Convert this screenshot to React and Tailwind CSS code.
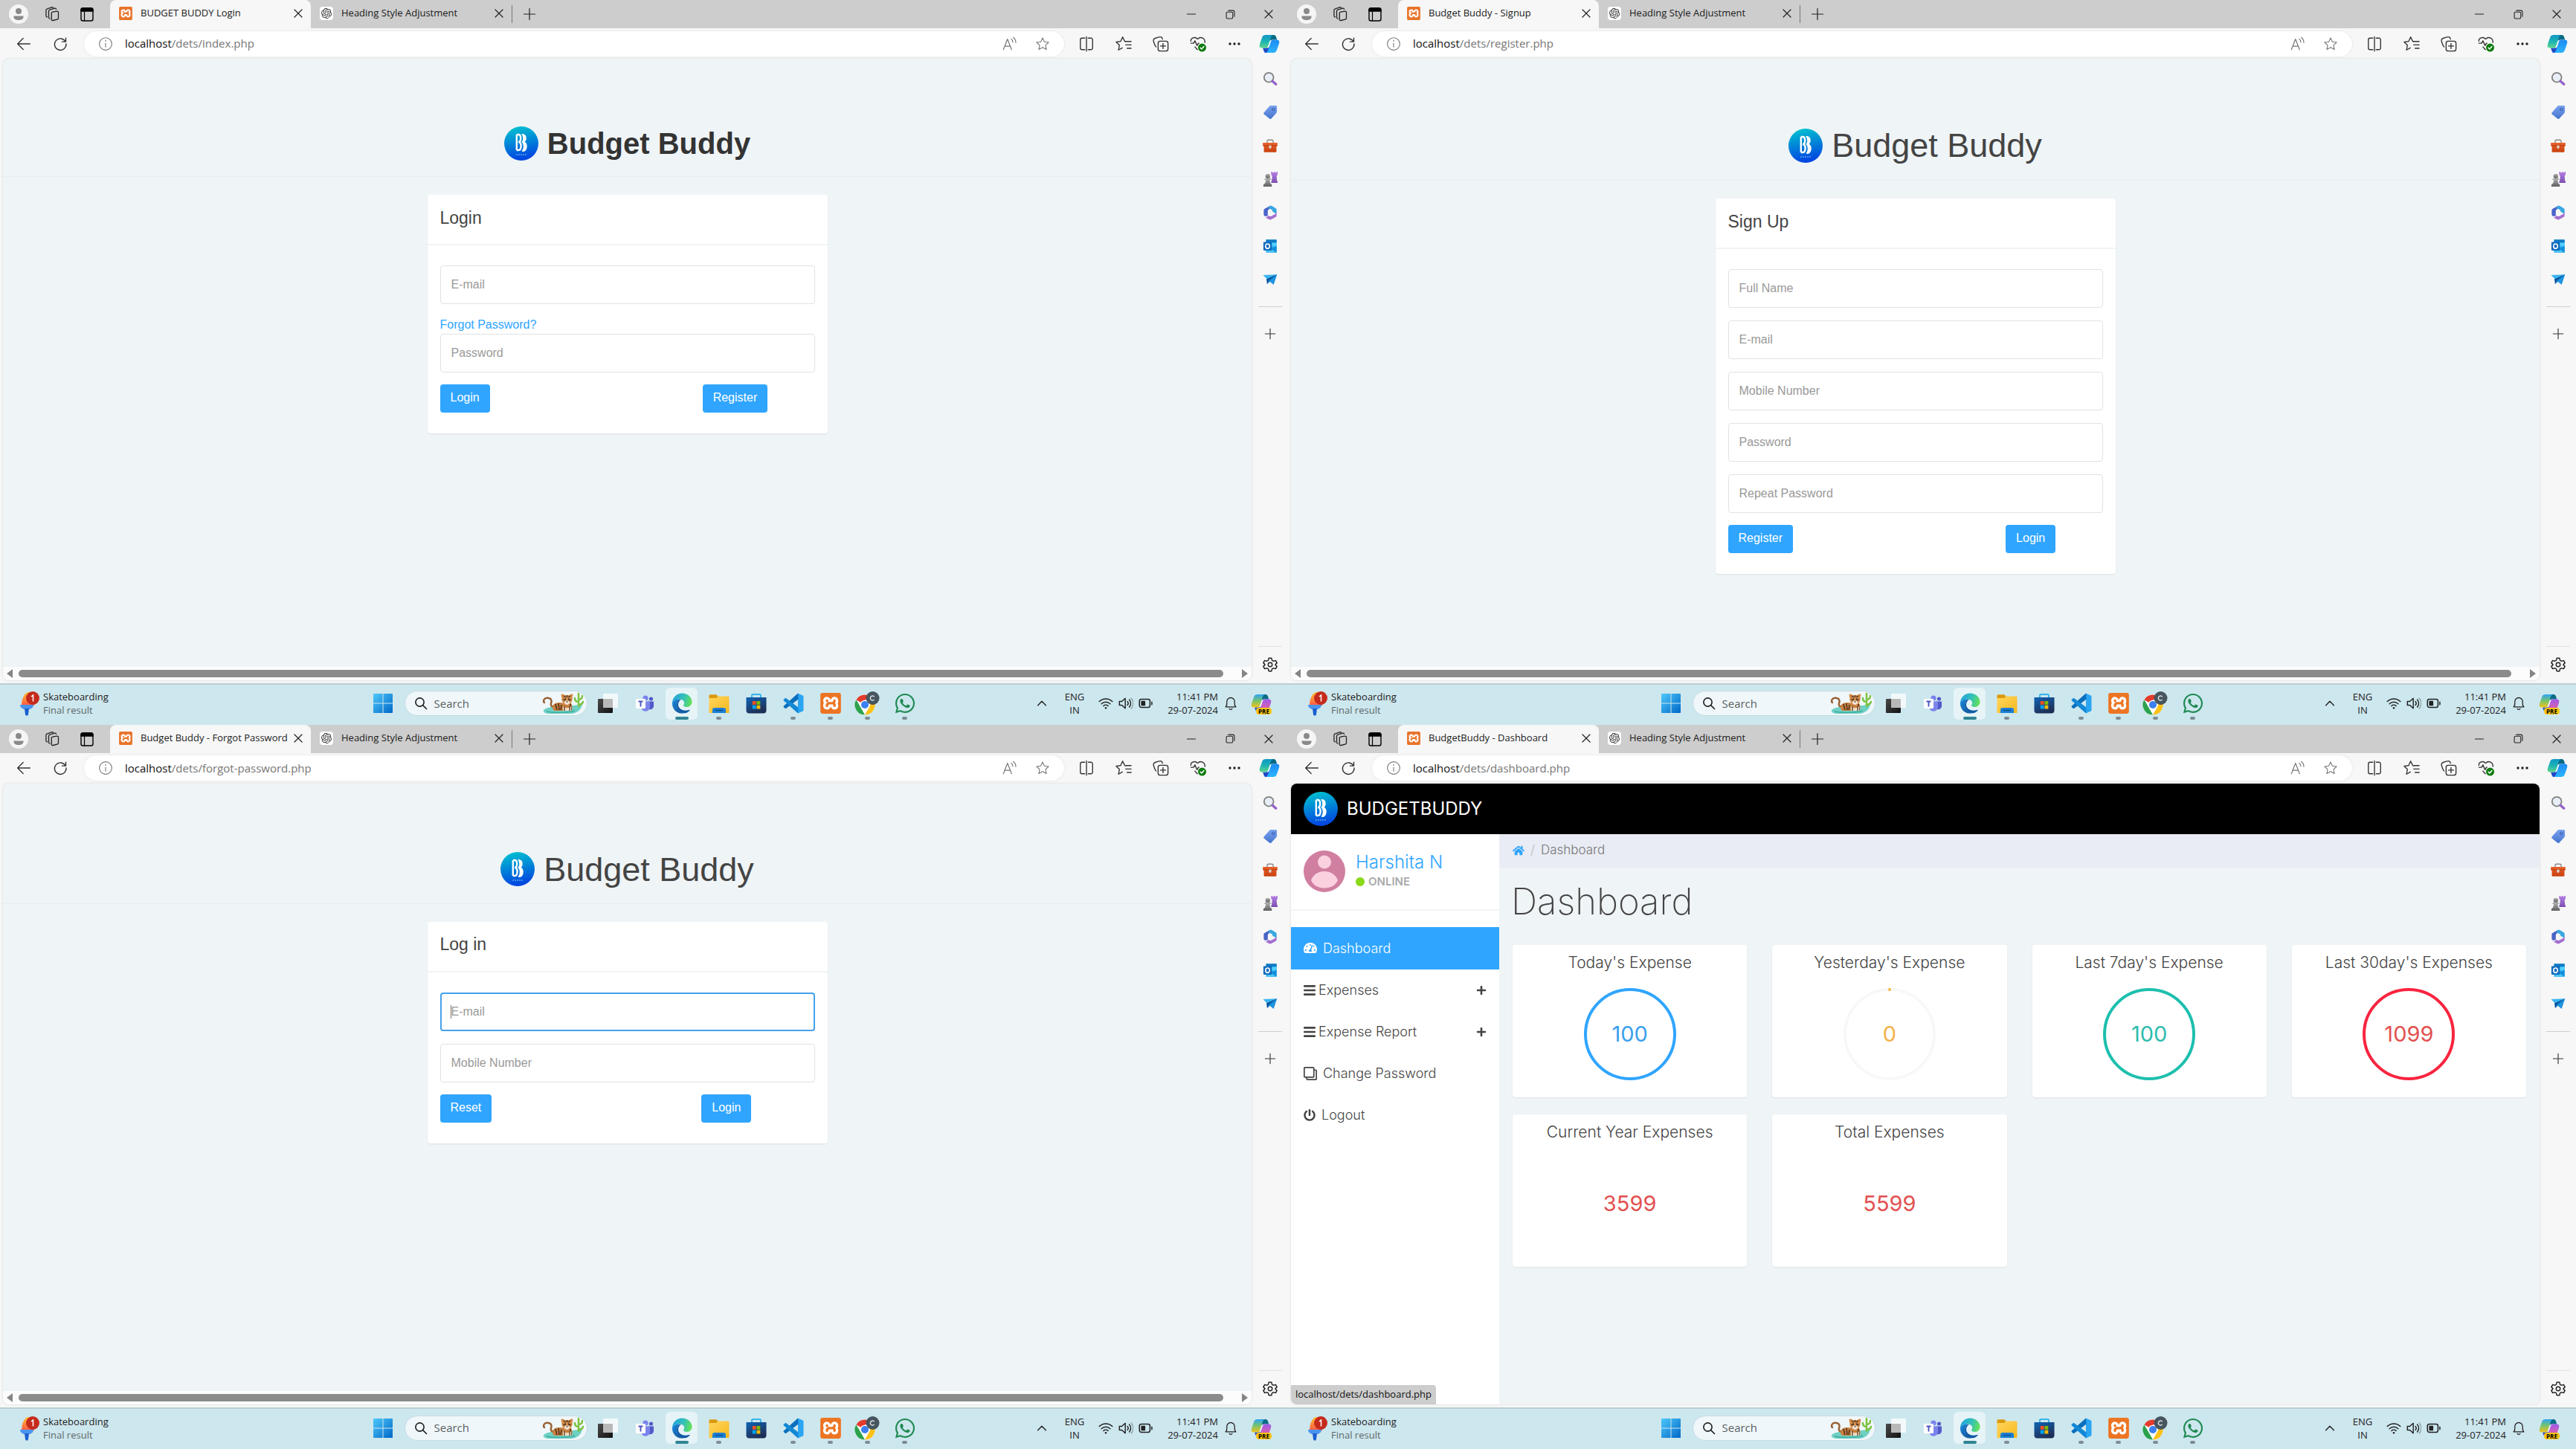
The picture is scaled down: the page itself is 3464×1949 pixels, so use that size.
import React from "react";
import { FaHome, FaBars, FaPlus, FaRegClone, FaPowerOff, FaTachometerAlt, FaWhatsapp } from "react-icons/fa";
import { SiXampp, SiOpenai } from "react-icons/si";

/* ---------- shared gradients ---------- */

function Gradients() {
  return (
    <svg className="absolute h-0 w-0" aria-hidden="true">
      <defs>
        <linearGradient id="gLogo" x1="0" y1="0" x2="0.2" y2="1">
          <stop offset="0" stopColor="#00c9cf" />
          <stop offset="1" stopColor="#0048e0" />
        </linearGradient>
        <linearGradient id="gCopA" x1="0" y1="0" x2="0" y2="1">
          <stop offset="0" stopColor="#0f97c4" />
          <stop offset="0.5" stopColor="#1cb3b5" />
          <stop offset="1" stopColor="#5fd68a" />
        </linearGradient>
        <linearGradient id="gCopB" x1="0" y1="0" x2="0" y2="1">
          <stop offset="0" stopColor="#1e8bf0" />
          <stop offset="1" stopColor="#2bb4ff" />
        </linearGradient>
        <linearGradient id="gCopC" x1="0" y1="0" x2="0" y2="1">
          <stop offset="0" stopColor="#2aa5f5" />
          <stop offset="0.5" stopColor="#7ac36a" />
          <stop offset="1" stopColor="#f3c31c" />
        </linearGradient>
        <linearGradient id="gCopD" x1="0" y1="0" x2="0" y2="1">
          <stop offset="0" stopColor="#a05be8" />
          <stop offset="1" stopColor="#f0629a" />
        </linearGradient>
        <linearGradient id="gTag" x1="0" y1="0" x2="0" y2="1">
          <stop offset="0" stopColor="#7ba4ee" />
          <stop offset="1" stopColor="#4474cf" />
        </linearGradient>
        <linearGradient id="gBox" x1="0" y1="0" x2="0" y2="1">
          <stop offset="0" stopColor="#e8632b" />
          <stop offset="1" stopColor="#c9400f" />
        </linearGradient>
        <linearGradient id="gPawn" x1="0" y1="0" x2="0" y2="1">
          <stop offset="0" stopColor="#b4b4b4" />
          <stop offset="1" stopColor="#5f5f5f" />
        </linearGradient>
        <linearGradient id="gRook" x1="0" y1="0" x2="0" y2="1">
          <stop offset="0" stopColor="#b57fe6" />
          <stop offset="1" stopColor="#7c4fae" />
        </linearGradient>
        <linearGradient id="gWin" x1="0" y1="0" x2="1" y2="1">
          <stop offset="0" stopColor="#4fc8fb" />
          <stop offset="1" stopColor="#0068c8" />
        </linearGradient>
        <linearGradient id="gEdge" x1="0" y1="0.2" x2="1" y2="0.4">
          <stop offset="0" stopColor="#1fa2e0" />
          <stop offset="0.6" stopColor="#35c1b5" />
          <stop offset="1" stopColor="#63e05a" />
        </linearGradient>
        <linearGradient id="gEdgeB" x1="0" y1="0" x2="1" y2="1">
          <stop offset="0" stopColor="#1b8ce0" />
          <stop offset="1" stopColor="#114a8b" />
        </linearGradient>
        <linearGradient id="gFolder" x1="0" y1="0" x2="1" y2="1">
          <stop offset="0" stopColor="#ffd65c" />
          <stop offset="1" stopColor="#f6b81f" />
        </linearGradient>
        <linearGradient id="gStore" x1="0" y1="0" x2="0.5" y2="1">
          <stop offset="0" stopColor="#0f63b5" />
          <stop offset="1" stopColor="#1e2f55" />
        </linearGradient>
        <linearGradient id="gSki" x1="0" y1="0" x2="0" y2="1">
          <stop offset="0" stopColor="#ffc02e" />
          <stop offset="1" stopColor="#ff5a46" />
        </linearGradient>
        <linearGradient id="gTvA" x1="0" y1="0" x2="1" y2="1">
          <stop offset="0" stopColor="#4a4a4a" />
          <stop offset="1" stopColor="#111111" />
        </linearGradient>
      </defs>
    </svg>
  );
}

/* ---------- line icons ---------- */

function Line({ className = "h-5 w-5", sw = 1.5, children }) {
  return (
    <svg
      viewBox="0 0 24 24"
      className={className}
      fill="none"
      stroke="currentColor"
      strokeWidth={sw}
      strokeLinecap="round"
      strokeLinejoin="round"
      aria-hidden="true"
    >
      {children}
    </svg>
  );
}

const CloseIcon = ({ className = "h-4 w-4" }) => (
  <Line className={className} sw={1.8}>
    <path d="M4.500 4.500l15 15M19.500 4.500l-15 15" />
  </Line>
);

const ProfileIcon = () => (
  <svg viewBox="0 0 26 26" className="h-[26px] w-[26px]" aria-hidden="true">
    <circle cx="13" cy="13" r="13" fill="#f5f5f5" />
    <circle cx="13" cy="9" r="4" fill="#8a8a8a" />
    <path d="M6.500 15.500h13c.5 4-2.500 5.500-6.500 5.500s-7-1.500-6.500-5.500z" fill="#8a8a8a" />
  </svg>
);

const WorkspacesIcon = () => (
  <Line className="h-6 w-6" sw={1.3}>
    <path d="M12.500 9.200l6-1c1.200-.2 2 .6 2 1.700v7.300c0 1-.6 1.700-1.600 1.900l-5.600 1.400c-1.200.3-2-.5-2-1.600v-8c0-.9.400-1.600 1.200-1.700z" />
    <path d="M9 18.200c-1-.1-1.500-.9-1.500-1.900V8.200c0-1 .5-1.800 1.500-2.100l6.500-1.900c1-.3 1.800.2 2 1.200M5.500 16c-1-.1-1.600-.9-1.600-1.900V7c0-1 .6-1.900 1.600-2.200L11.500 2.800c.9-.3 1.600 0 2 .6" />
  </Line>
);

const TabActionsIcon = () => (
  <Line className="h-6 w-6" sw={1.4}>
    <rect x="4" y="4" width="16" height="17" rx="2.500" />
    <path d="M4 6.500a2.500 2.500 0 0 1 2.500-2.500h11A2.500 2.500 0 0 1 20 6.500V8H4z" fill="currentColor" />
    <path d="M8.500 8v13" strokeWidth="1.200" />
  </Line>
);

const CopilotIcon = ({ a = "url(#gCopA)", b = "url(#gCopB)", className = "h-7 w-7" }) => (
  <svg viewBox="0 0 28 28" className={className} aria-hidden="true">
    <path d="M13 2h6.500c2 0 3 1 3.700 3l.9 3.500h-6c-2.200 0-3 .8-3.600 2.500z" fill="#0b6a86" />
    <path d="M15 26H9.500c-1.600 0-2.500-1-3-2.600L5 19.500h6c2 0 2.800-.8 3.300-2.500z" fill="#2148c8" />
    <path d="M9 2h10.500c-2 0-2.800 1.200-3.400 3l-3.800 12c-.6 1.800-1.500 2.500-3.300 2.500H4C1 19.500.2 17.300 1 14.500L4.200 5.200C5 3 6.500 2 9 2z" fill={a} />
    <path d="M19 26H8.500c2 0 2.800-1.200 3.400-3l3.800-12c.6-1.800 1.500-2.500 3.300-2.500h5c3 0 3.800 2.200 3 5l-3.200 9.300C23 25 21.500 26 19 26z" fill={b} />
    <path d="M14.800 9.500h2.700c-1 .4-1.500 1-1.800 2l-2.300 7h-2.700c1-.4 1.500-1 1.800-2z" fill="#eef7fb" />
  </svg>
);

/* ---------- browser chrome ---------- */

function Tab({ title, icon, active }) {
  return (
    <div
      className={
        active
          ? "flex h-[38px] w-[270px] items-center rounded-t-lg bg-[#f7f7f7] pb-0.5 pl-3 pr-[9px]"
          : "flex h-[38px] w-[270px] items-center pb-0.5 pl-3 pr-[9px]"
      }
    >
      {icon}
      <span className="ml-[11px] flex-1 truncate text-[13px] text-[#1b1b1b]">{title}</span>
      <button type="button" aria-label={`Close ${title}`} className="text-[#222]">
        <CloseIcon />
      </button>
    </div>
  );
}

function TitleBar({ title }) {
  return (
    <div className="flex h-[38px] shrink-0 items-center bg-[#cdcdcd] pl-3 text-[#222]">
      <button type="button" aria-label="Profile"><ProfileIcon /></button>
      <button type="button" aria-label="Workspaces" className="ml-5"><WorkspacesIcon /></button>
      <button type="button" aria-label="Tab actions" className="ml-[23px] mr-[19px] text-black"><TabActionsIcon /></button>
      <Tab
        active
        title={title}
        icon={
          <span className="flex h-[18px] w-[18px] shrink-0 items-center justify-center rounded-sm bg-white">
            <SiXampp className="h-[18px] w-[18px] text-[#e8742a]" />
          </span>
        }
      />
      <Tab
        title="Heading Style Adjustment"
        icon={
          <span className="flex h-[18px] w-[18px] shrink-0 items-center justify-center rounded-sm bg-white">
            <SiOpenai className="h-[14px] w-[14px] text-[#333]" />
          </span>
        }
      />
      <div className="h-6 w-px bg-[#777]" />
      <button type="button" aria-label="New tab" className="ml-[14px]">
        <Line className="h-[18px] w-[18px]" sw={1.6}><path d="M12 2v20M2 12h20" /></Line>
      </button>
      <div className="flex-1" />
      <button type="button" aria-label="Minimize" className="flex w-[52px] justify-center">
        <Line className="h-3 w-3" sw={2}><path d="M0 12h24" /></Line>
      </button>
      <button type="button" aria-label="Restore" className="flex w-[52px] justify-center">
        <Line className="h-[13px] w-[13px]" sw={2}>
          <rect x="2" y="6" width="16" height="16" rx="2.500" />
          <path d="M7 2h11a4 4 0 0 1 4 4v11" />
        </Line>
      </button>
      <button type="button" aria-label="Close window" className="flex w-[52px] justify-center">
        <CloseIcon className="h-4 w-4" />
      </button>
    </div>
  );
}

const StarPath = "M12 2.500l2.900 6.300 6.900.8-5.100 4.700 1.400 6.800L12 17.700l-6.100 3.400 1.400-6.800-5.100-4.700 6.900-.8z";

function Toolbar({ path }) {
  return (
    <div className="flex h-[41px] shrink-0 items-center bg-[#f7f7f7] pl-[22px] pr-[11px] text-[#333]">
      <button type="button" aria-label="Back">
        <Line className="h-5 w-5" sw={1.6}><path d="M22 12H2.500M11 3l-9 9 9 9" /></Line>
      </button>
      <button type="button" aria-label="Refresh" className="ml-[29px] mr-[22px]">
        <Line className="h-5 w-5" sw={1.7}><path d="M20.500 8.500A9.300 9.300 0 1 0 21.500 12M21 2.500v6h-6" /></Line>
      </button>
      <div className="flex h-[34px] flex-1 items-center rounded-full bg-white pl-[19px] pr-[19px] text-[#767676] shadow-[0_0_3px_rgba(0,0,0,0.10)]">
        <Line className="h-5 w-5" sw={1.3}>
          <circle cx="12" cy="12" r="10" />
          <path d="M12 11v6" /><path d="M12 7v.4" strokeWidth="1.800" />
        </Line>
        <span className="ml-4 flex-1 text-[15px]">
          <span className="text-[#111]">localhost</span>{path}
        </span>
        <button type="button" aria-label="Read aloud">
          <Line className="h-[22px] w-[22px]" sw={1.3}>
            <path d="M2.500 20.500L8.500 5l6 15.500M4.500 15.500h8M14 5c1.500 1 2.300 2.700 2.300 4.500M17 2.500c2.300 1.700 3.700 4.500 3.700 7.500" />
          </Line>
        </button>
        <button type="button" aria-label="Add to favorites" className="ml-[23px]">
          <Line className="h-5 w-5" sw={1.3}><path d={StarPath} /></Line>
        </button>
      </div>
      <button type="button" aria-label="Split screen" className="ml-[19px]">
        <Line className="h-[22px] w-[22px]" sw={1.5}>
          <path d="M9.500 3.500H5.500A2.500 2.500 0 0 0 3 6v12a2.500 2.500 0 0 0 2.500 2.500h4M14.500 3.500h4A2.500 2.500 0 0 1 21 6v12a2.500 2.500 0 0 1-2.500 2.500h-4M12 1.500v21" />
        </Line>
      </button>
      <button type="button" aria-label="Favorites" className="ml-7">
        <Line className="h-[22px] w-[22px]" sw={1.5}>
          <path d="M15.500 8.800l-1.800-.3L10.500 2 7.500 8.500l-6.500.7 4.800 4.600L4.500 21l5.500-3.200M15 8.500h8M15 13.500h8M17 18.500h6" />
        </Line>
      </button>
      <button type="button" aria-label="Collections" className="ml-7">
        <Line className="h-[22px] w-[22px]" sw={1.5}>
          <rect x="8" y="8" width="14.500" height="14.500" rx="3" />
          <path d="M15.200 11.500v7.500M11.500 15.200H19M5 16.500C3.500 15 1 8.500 1.200 6.500 1.400 4 4 3.500 6.500 2.800S12 1 13.200 2.500c.7.800 1 1.500 1.200 2.500" />
        </Line>
      </button>
      <button type="button" aria-label="Browser essentials" className="ml-7">
        <Line className="h-[22px] w-[22px]" sw={1.5}>
          <path d="M11 20.500l-3.500-4M1.500 11h4l2-3.500 3 7 2-3.500h1M1.500 8C1 3.500 7.500.5 11.500 5 15.500.500 23 3.500 22 10" />
          <circle cx="18" cy="17.500" r="6" fill="#107c10" stroke="none" />
          <path d="M15.500 17.800l1.800 1.800 3.300-3.800" stroke="#fff" strokeWidth="1.600" />
        </Line>
      </button>
      <button type="button" aria-label="Settings and more" className="ml-[27px]">
        <svg viewBox="0 0 22 22" className="h-[22px] w-[22px]" fill="#222" aria-hidden="true">
          <circle cx="5" cy="11" r="1.700" /><circle cx="11" cy="11" r="1.700" /><circle cx="17" cy="11" r="1.700" />
        </svg>
      </button>
      <button type="button" aria-label="Copilot" className="ml-[22px]"><CopilotIcon /></button>
    </div>
  );
}

const sideIcons = [
  [
    "Search",
    <>
      <circle cx="9" cy="9" r="7" fill="#e8eef6" stroke="#808080" strokeWidth="2" />
      <path d="M14.500 14.500l5 4.500" stroke="#9562c9" strokeWidth="3.600" strokeLinecap="round" />
    </>,
  ],
  [
    "Shopping",
    <>
      <path d="M12 1h7.500A1.500 1.500 0 0 1 21 2.500V10c0 .8-.3 1.500-.8 2l-7.500 8.300c-.8.800-2 .8-2.800 0L2 14c-.8-.8-.8-2 0-2.800L10 1.800C10.500 1.200 11.300 1 12 1z" fill="url(#gTag)" />
      <circle cx="15.800" cy="6.500" r="2" fill="none" stroke="#2b4f9e" strokeWidth="1" />
    </>,
  ],
  [
    "Tools",
    <>
      <path d="M6.500 7V5c0-1.500.7-2.500 2-2.500h5c1.300 0 2 1 2 2.500v2" fill="none" stroke="#8a8a8a" strokeWidth="1.500" />
      <path d="M.2 6.500h21.600V11l-1.500 1v7.500c0 .6-.4 1-1 1H2.700c-.6 0-1-.4-1-1V12L.2 11z" fill="url(#gBox)" />
      <path d="M.5 10.800h21" stroke="#b3380c" strokeWidth="1" />
      <rect x="9.300" y="10.500" width="3.400" height="4.500" rx="1" fill="#d8d8d8" />
    </>,
  ],
  [
    "Games",
    <>
      <path d="M12.500 0h2v1.500h1.700V0h2.200v1.500h1.700V0H22v4.500L20.500 6l.5 6.500 1 2.500v1.500H12.500V15l1-2.500.5-6.500-1.500-1.500z" fill="url(#gRook)" />
      <circle cx="7.500" cy="6.500" r="3.500" fill="url(#gPawn)" />
      <path d="M2.500 11c0-1 1.500-1.500 5-1.500s5 .5 5 1.500-1 1.200-2.300 1.500l1 4.500 2.300 2v3H1v-3l2.500-2 1.200-4.500C3.500 12.200 2.500 12 2.500 11z" fill="url(#gPawn)" />
    </>,
  ],
  [
    "Microsoft 365",
    <>
      <path d="M10.500 1L3 5.200c-1 .6-1.500 1.500-1.500 2.500v6c0 2 2.500 3.500 4.500 2.300l1.500-1V8.500c0-1 .4-1.800 1.300-2.300L14 3z" fill="#4a64c8" />
      <path d="M10.500 1c1-.5 2-.3 3 .2l5.500 3.300c1 .6 1.500 1.500 1.500 2.500v6l-6-3.300V9c0-1-.5-1.800-1.400-2.300L8 4z" fill="#3aa7e0" />
      <path d="M20.500 8v7c0 1-.5 2-1.500 2.500L13.500 20.700c-1.500.9-3.500.9-5 0L3 17.500c3 1.300 4.500-.5 4.500-2.500l2.500 1.200c1 .5 1.800.5 2.800 0L20 12z" fill="#a56fd0" />
    </>,
  ],
  [
    "Outlook",
    <>
      <path d="M5 1.500h15.500v19H5z" fill="#28a8ea" />
      <path d="M5 1.500h15.500V6H5z" fill="#1279c4" />
      <path d="M12 6h8.500v5.500H12z" fill="#50d0ff" />
      <path d="M20.500 10.500L11 16v4.500h9.500z" fill="#0f8fdc" />
      <path d="M4 20.500h16.500l-8-5z" fill="#4cc5f5" />
      <rect x="1" y="5" width="12.500" height="12.500" rx="1" fill="#0f6cbd" />
      <ellipse cx="7.200" cy="11.200" rx="3" ry="3.500" fill="none" stroke="#fff" strokeWidth="1.700" />
    </>,
  ],
  [
    "Drop",
    <>
      <path d="M.5 4.500L21 3.500 8 12z" fill="#3cb4f0" />
      <path d="M21 3.500L8.500 11 16 18.500z" fill="#0f7fd2" />
      <path d="M21 3.500L5.500 10.500l1 7z" fill="#0a4f96" />
      <path d="M21 3.500L8.800 12l-2.300 5.500 3.500-3.500z" fill="#127cc8" />
      <path d="M9.500 13.500L16 18.500 21 3.500z" fill="#1f94e0" />
    </>,
  ],
];

function EdgeSidebar() {
  return (
    <div className="-mb-1 flex w-[49px] shrink-0 flex-col items-center bg-[#f7f7f7] pt-1">
      {sideIcons.map(([name, art]) => (
        <button key={name} type="button" aria-label={name} className="flex h-[45px] w-full items-center justify-center">
          <svg viewBox="0 0 22 22" className="h-5 w-5" aria-hidden="true">{art}</svg>
        </button>
      ))}
      <div className="mt-[14px] h-px w-8 bg-[#cfcfcf]" />
      <button type="button" aria-label="Customize" className="mt-[28px] text-[#333]">
        <Line className="h-4 w-4" sw={1.7}><path d="M12 2v20M2 12h20" /></Line>
      </button>
      <div className="flex-1" />
      <div className="h-px w-8 bg-[#e2e2e2]" />
      <button type="button" aria-label="Settings" className="mb-[14px] mt-[13px] text-[#222]">
        <Line className="h-[22px] w-[22px]" sw={1.6}>
          <path d="M10 2.500h4l.7 3.100 2.300 1.300 3-1 2 3.500-2.300 2.200v.8L22 14.600l-2 3.500-3-1-2.300 1.300-.7 3.100h-4l-.7-3.100L7 17.100l-3 1-2-3.500 2.300-2.200v-.8L2 9.400l2-3.500 3 1 2.300-1.300z" />
          <circle cx="12" cy="12" r="3" />
        </Line>
      </button>
    </div>
  );
}

/* ---------- taskbar ---------- */

const TigerArt = () => (
  <svg viewBox="0 0 58 32" className="h-8 w-[58px]" aria-hidden="true">
    <path d="M4 25c4-4 14-5 26-5s20-2 26-3c-1 7-6 12-14 13H12c-5 0-9-2-8-5z" fill="#6fd0c4" />
    <path d="M8 27c8 2 28 2 38-1" stroke="#3fae9f" strokeWidth="1.500" fill="none" />
    <path d="M18 20c-3 1-5-1-4-4s1-6-3-7c-4-1-7 1-7 4 0 2 1 2 2 2" fill="none" stroke="#9a6236" strokeWidth="2.500" />
    <path d="M17 18c4-4 10-3 14-2h10c2 3 2 8 0 10H19c-3-1-4-5-2-8z" fill="#c9803f" />
    <path d="M20 17l2 8M24 16l1 9M28 18l-1 7M40 17l1 8" stroke="#4b3020" strokeWidth="1.500" />
    <path d="M28 4c2-1 3 0 4 1h7c1-1 3-2 4-1 1 2 0 3-.5 4 1 4-2 10-7 10s-8-6-7-10c-.5-1-1.500-2-.5-4z" fill="#d08a48" />
    <path d="M31 6l3 2M40 6l-3 2M30 11l3 1M41 11l-3 1M35.500 5v3" stroke="#4b3020" strokeWidth="1.300" />
    <path d="M32 14c1-2 6-2 7 0s-2 4-3.500 4-4.500-2-3.500-4z" fill="#f3e6d6" />
    <circle cx="33" cy="10.500" r="1" fill="#222" /><circle cx="38" cy="10.500" r="1" fill="#222" />
    <path d="M34 13.500h3l-1.500 1.500z" fill="#222" />
    <path d="M30 20c3 3 8 3 11 0v6H30z" fill="#f0dcc4" />
    <path d="M32 20v6M39 20v6" stroke="#4b3020" strokeWidth="1.200" />
    <path d="M51 20V3M51 14c-4 0-5-2-5-5M51 11c3 0 5-2 5-5M51 18c3 0 5-1 6-4" stroke="#7cc242" strokeWidth="2.500" fill="none" strokeLinecap="round" />
  </svg>
);

const TaskViewArt = () => (
  <svg viewBox="0 0 28 28" className="h-7 w-7" aria-hidden="true">
    <rect x="1" y="8" width="20" height="19" rx="1" fill="url(#gTvA)" />
    <rect x="8" y="1" width="20" height="19" rx="1" fill="#ffffff" opacity="0.75" />
    <rect x="8" y="8" width="13" height="12" fill="#b9b9b9" />
  </svg>
);

const TeamsArt = () => (
  <svg viewBox="0 0 24 24" className="h-6 w-6" aria-hidden="true">
    <circle cx="13" cy="5" r="3.600" fill="#7b83eb" />
    <circle cx="20.500" cy="6" r="2.600" fill="#5059c9" />
    <path d="M16 9.500h8v6.500a4.500 4.500 0 0 1-7 3.500z" fill="#5059c9" />
    <path d="M8 9.500h11V17a6 6 0 0 1-11 3z" fill="#7b83eb" />
    <rect x="0" y="6" width="13" height="13" rx="1" fill="#ffffff" />
    <path d="M3.500 9.500h6M6.500 9.500v7" stroke="#4b53bc" strokeWidth="1.900" />
  </svg>
);

const EdgeArt = () => (
  <svg viewBox="0 0 28 28" className="h-7 w-7" aria-hidden="true">
    <path d="M1 13C1.500 6 7 .5 14.200.5 22 .5 27.500 6 27.500 12c0 4-2.800 7-7 7-2.700 0-4.500-1-4.500-2.200 0-.9 1.200-1.400 1.200-3.300 0-2.700-2.500-5-6.500-5C6 8.500 2.500 10 1 13z" fill="url(#gEdge)" />
    <path d="M1 13c1.500-3 5-4.500 9.200-4.500 1 0 2 .2 2.800.5-3.500.5-6 3.500-6 7.500 0 5 4 9.500 9 10.800-1 .2-1.500.2-2.500.2C6 27.500.500 21 1 13z" fill="url(#gEdgeB)" />
    <path d="M13 9c-2.500 1.500-4 4-4 6.800 0 5 5 8 10 8 2.500 0 4.500-.8 5.300-1 .4 0 .5.300.3.600C22.500 26 19 27.500 15.500 27.300 10.500 26 7 21.500 7 16.500 7 12.500 9.500 9.500 13 9z" fill="#0e5aa7" />
  </svg>
);

const FolderArt = () => (
  <svg viewBox="0 0 28 28" className="h-7 w-7" aria-hidden="true">
    <path d="M.5 4c0-1 .6-1.700 1.600-1.700h8L13 5v3H.5z" fill="#d99a10" />
    <path d="M.5 7H10l2.500-2.500H26c1 0 1.500.7 1.500 1.500v20c0 .6-.4 1-1 1h-25c-.6 0-1-.4-1-1z" fill="url(#gFolder)" />
    <path d="M5 27v-4c0-1.700 1-3 3-3h12c2 0 3 1.300 3 3v4z" fill="#1b7fd4" />
    <path d="M9 23.500h10" stroke="#0c4f93" strokeWidth="1.500" />
  </svg>
);

const StoreArt = () => (
  <svg viewBox="0 0 28 28" className="h-7 w-7" aria-hidden="true">
    <path d="M8 7V3.500C8 2.500 8.700 2 9.500 2h9c.8 0 1.500.5 1.500 1.500V7" fill="none" stroke="#35b5ec" strokeWidth="2" />
    <path d="M.5 6h27v17.500a4 4 0 0 1-4 4h-19a4 4 0 0 1-4-4z" fill="url(#gStore)" />
    <rect x="8.800" y="11" width="4.800" height="4.800" fill="#f25022" />
    <rect x="14.500" y="11" width="4.800" height="4.800" fill="#7fba00" />
    <rect x="8.800" y="16.700" width="4.800" height="4.800" fill="#00a4ef" />
    <rect x="14.500" y="16.700" width="4.800" height="4.800" fill="#ffb900" />
  </svg>
);

const CodeArt = () => (
  <svg viewBox="0 0 28 28" className="h-7 w-7" aria-hidden="true">
    <path d="M20 .5l6.500 3c.6.300 1 .8 1 1.500v18c0 .7-.4 1.200-1 1.500l-6.500 3z" fill="#2aa5f2" />
    <path d="M20 .5L1 17.500c-.6.500-.6 1.300 0 1.800l1.700 1.500c.5.400 1.100.400 1.600 0L20.500 8.500z" fill="#0a6fbd" />
    <path d="M20 27.500L1 10.500c-.6-.5-.6-1.300 0-1.800l1.700-1.500c.5-.4 1.100-.4 1.600 0L20.500 19.500z" fill="#1288d6" />
  </svg>
);

const XamppArt = () => (
  <span className="flex h-7 w-7 items-center justify-center rounded-sm bg-white">
    <SiXampp className="h-7 w-7 text-[#ec7422]" />
  </span>
);

const ChromeArt = () => (
  <svg viewBox="0 0 36 32" className="h-8 w-9" aria-hidden="true">
    <circle cx="14" cy="18" r="13.500" fill="#fff" />
    <path d="M14 18L2.300 11.200A13.500 13.500 0 0 1 25.700 11.200H14z" fill="#e33b2e" />
    <path d="M2.300 11.200L8.200 21.300 14 31.500A13.500 13.500 0 0 1 2.300 11.200z" fill="#2ba24c" />
    <path d="M25.700 11.200A13.500 13.500 0 0 1 14 31.500l5.900-10.200c1.800-3.200 1.800-6.500 0-10.100z" fill="#fbc116" />
    <circle cx="14" cy="18" r="6.300" fill="#fff" />
    <circle cx="14" cy="18" r="5" fill="#3b7ff0" />
    <circle cx="24.500" cy="9" r="9" fill="#46555e" />
    <path d="M26.700 7.200a3 3 0 1 0 0 3.700" stroke="#d5dbdf" strokeWidth="1.500" fill="none" />
  </svg>
);

const apps = [
  ["Task view", <TaskViewArt />, ""],
  ["Teams", <TeamsArt />, ""],
  ["Edge", <EdgeArt />, "active"],
  ["File Explorer", <FolderArt />, "open"],
  ["Store", <StoreArt />, ""],
  ["Visual Studio Code", <CodeArt />, "open"],
  ["XAMPP", <XamppArt />, "open"],
  ["Chrome", <ChromeArt />, "open"],
  ["WhatsApp", <FaWhatsapp className="h-[30px] w-[30px] text-[#1f8a53]" />, "open"],
];

function AppButton({ name, art, state }) {
  return (
    <button type="button" aria-label={name} className="flex h-[51px] w-[50px] items-center justify-center">
      <span
        className={
          state === "active"
            ? "relative flex h-[43px] w-[43px] items-center justify-center rounded-md bg-[#e6f3f7]"
            : "relative flex h-[43px] w-[43px] items-center justify-center"
        }
      >
        {art}
        {state === "active" && <span className="absolute bottom-0 h-1 w-[18px] rounded-full bg-[#2f8593]" />}
        {state === "open" && <span className="absolute bottom-0 h-1 w-[7px] rounded-full bg-[#7d8c92]" />}
      </span>
    </button>
  );
}

function Taskbar() {
  return (
    <div className="grid h-[56px] shrink-0 grid-cols-[1fr_auto_1fr] items-center border-t-2 border-[#bccdd2] bg-[#cde7ee] pb-[3px] text-[13px] text-[#222]">
      <div className="flex items-center pl-[26px]">
        <svg viewBox="0 0 28 34" className="h-[34px] w-7" aria-hidden="true">
          <path d="M3 20C3 12 6 3 12 2c7 0 8 10 8 18z" fill="url(#gSki)" />
          <path d="M1 19h18c0 4-4 6-7 6H8c-3 0-7-2-7-6z" fill="#4a94ee" />
          <path d="M7 24h6l-1 8c-.4 2-3.500 2-4 0z" fill="#1b5fd0" />
          <circle cx="18" cy="10" r="9" fill="#c42b1c" />
          <path d="M16 8l2.500-2v8.500" stroke="#fff" strokeWidth="1.500" fill="none" />
        </svg>
        <div className="ml-1 leading-[18px]">
          <div>Skateboarding</div>
          <div className="text-[#5c676b]">Final result</div>
        </div>
      </div>
      <div className="flex items-center pl-[14px]">
        <button type="button" aria-label="Start">
          <svg viewBox="0 0 26 26" className="h-[26px] w-[26px]" fill="url(#gWin)" aria-hidden="true">
            <path d="M1 0h11.500v12.500H0V1c0-.6.4-1 1-1zM13.500 0H25c.6 0 1 .4 1 1v11.500H13.500zM0 13.500h12.500V26H1c-.6 0-1-.4-1-1zM13.500 13.500H26V25c0 .6-.4 1-1 1H13.500z" />
          </svg>
        </button>
        <label className="ml-4 mr-[2px] flex h-[34px] w-[246px] items-center rounded-full border border-[#c4dbe1] bg-[#eff7fa] pl-3 pr-1">
          <Line className="h-[18px] w-[18px] shrink-0" sw={2.2}><circle cx="10" cy="10" r="7.500" /><path d="M15.500 15.500L22 22" /></Line>
          <input
            type="search"
            aria-label="Search"
            placeholder="Search"
            className="ml-[9px] w-0 flex-1 bg-transparent text-[15px] outline-none placeholder:text-[#5c5f61]"
          />
          <TigerArt />
        </label>
        {apps.map(([name, art, state]) => (
          <AppButton key={name} name={name} art={art} state={state} />
        ))}
        <span className="w-[3px]" />
      </div>
      <div className="flex items-center justify-end pr-[22px]">
        <button type="button" aria-label="Hidden icons">
          <Line className="h-4 w-4" sw={2.2}><path d="M4 16l8-8 8 8" /></Line>
        </button>
        <div className="ml-[18px] w-9 text-center leading-[18px]">ENG<br />IN</div>
        <div className="ml-[14px] flex items-center gap-[7px]">
          <Line className="h-5 w-5" sw={1.8}>
            <path d="M1.500 9a15 15 0 0 1 21 0M5 12.800a10 10 0 0 1 14 0M8.300 16.300a5.300 5.300 0 0 1 7.400 0" />
            <circle cx="12" cy="19.500" r="1.500" fill="currentColor" stroke="none" />
          </Line>
          <Line className="h-5 w-5" sw={1.7}>
            <path d="M1.500 9v6h4l5.500 5V4L5.500 9zM14.500 9a4.500 4.500 0 0 1 0 6M17.500 6a9 9 0 0 1 0 12" />
            <path d="M20.500 3.500a13 13 0 0 1 0 17" stroke="#8fa3a9" />
          </Line>
          <Line className="h-5 w-5" sw={1.8}>
            <rect x="1.500" y="5.500" width="17" height="13" rx="3" />
            <path d="M5 9h5v6H5zM21.500 10v4" fill="currentColor" />
          </Line>
        </div>
        <div className="ml-[9px] w-[78px] text-right leading-[18px]">11:41 PM<br />29-07-2024</div>
        <button type="button" aria-label="Notifications" className="ml-2 mr-[18px]">
          <Line className="h-[18px] w-[18px]" sw={1.7}>
            <path d="M12 2a7 7 0 0 0-7 7v5.500L3 18.500h18l-2-4V9a7 7 0 0 0-7-7zM9.500 21.500a2.700 2.700 0 0 0 5 0" />
          </Line>
        </button>
        <button type="button" aria-label="Copilot preview" className="relative">
          <CopilotIcon a="url(#gCopC)" b="url(#gCopD)" />
          <span className="absolute -bottom-px left-[7px] w-[21px] rounded-sm bg-[#f7c514] text-center text-[8px] font-bold leading-[9px] text-black">PRE</span>
        </button>
      </div>
    </div>
  );
}

function BrowserWindow({ title, path, children }) {
  return (
    <section className="flex min-w-0 flex-col overflow-hidden bg-[#f7f7f7] font-['Open_Sans','Noto_Sans',sans-serif]">
      <TitleBar title={title} />
      <Toolbar path={path} />
      <div className="flex min-h-0 flex-1 pb-1 pl-1">
        <main className="relative flex min-w-0 flex-1 flex-col overflow-hidden rounded-lg bg-[#eff4f7] shadow-[0_0_3px_rgba(0,0,0,0.15)]">
          {children}
        </main>
        <EdgeSidebar />
      </div>
      <Taskbar />
    </section>
  );
}

/* ---------- Budget Buddy pages ---------- */

const Logo = () => (
  <svg viewBox="0 0 46 46" className="h-[46px] w-[46px] shrink-0" role="img" aria-label="Budget Buddy logo">
    <circle cx="23" cy="23" r="23" fill="url(#gLogo)" />
    <path d="M16.800 11V32M16.800 11h2.200c2.300 0 3.200 1.800 3.200 4.700s-.9 5.300-3.200 5.300c2.600 0 3.600 2.500 3.600 5.500S21.600 32 19 32h-2.200" fill="none" stroke="#fff" strokeWidth="2.400" />
    <path d="M23 10c4.700-.3 6.700 2 6.700 5.800 0 2.500-.8 4.200-2.200 5 2 .8 3.200 2.900 3.200 5.900 0 4.500-2.200 7.300-5.700 7.300l-1.500-1c1.700-1.500 2.200-3.700 2.200-6.200 0-3-1-5-2.500-5.700 1.300-.7 2-2.500 2-4.800 0-2.700-.7-4.600-2.200-6.300z" fill="#fff" />
    <path d="M16 38h14" stroke="#5f9cf0" strokeWidth="1.300" strokeDasharray="2 1" />
  </svg>
);

function Scrollbar() {
  return (
    <div className="flex h-[18px] items-center bg-[#fcfcfc] px-[5px]">
      <svg viewBox="0 0 8 12" className="h-3 w-2" fill="#858585" aria-hidden="true"><path d="M8 0v12L0 6z" /></svg>
      <div className="ml-2 mr-[25px] h-[10px] flex-1 rounded-full bg-[#8b8b8b]" />
      <svg viewBox="0 0 8 12" className="h-3 w-2" fill="#858585" aria-hidden="true"><path d="M0 0v12l8-6z" /></svg>
    </div>
  );
}

const btn = "h-[38px] rounded bg-[#30a5ff] px-[14px] pb-0.5 text-base text-white";

function Field({ label, type = "text", focused }) {
  return (
    <div className="relative">
      <input
        type={type}
        aria-label={label}
        placeholder={label}
        className={
          focused
            ? "block h-[52px] w-full rounded border-2 border-[#44a1ea] bg-white px-[13px] text-base outline-none placeholder:text-[#999]"
            : "block h-[52px] w-full rounded border border-[#e2e2e2] bg-white px-[14px] text-base outline-none placeholder:text-[#999]"
        }
      />
      {focused && <span className="absolute left-[14px] top-[17px] h-[18px] w-px bg-[#777]" />}
    </div>
  );
}

function AuthPage({ headClass, nameClass, cardTitle, children }) {
  return (
    <>
      <div className="flex-1 font-['Liberation_Sans',Arial,sans-serif] text-[#444]">
        <header className={headClass}>
          <Logo />
          <h1 className={nameClass}>Budget Buddy</h1>
        </header>
        <div className="mx-auto mt-6 w-[538px] max-w-full rounded bg-white shadow-[0_1px_2px_rgba(0,0,0,0.08)]">
          <h2 className="flex h-[68px] items-center border-b-2 border-[#f1f3f6] px-[17px] pb-1 text-[23px]">{cardTitle}</h2>
          <form className="px-[17px] pb-7 pt-[27px]" onSubmit={(e) => e.preventDefault()}>{children}</form>
        </div>
      </div>
      <Scrollbar />
    </>
  );
}

const LoginPage = () => (
  <AuthPage
    headClass="flex h-[159px] items-center justify-center gap-3 border-b border-[#e9edf0] pt-[70px]"
    nameClass="text-[40px] font-bold leading-none text-[#333]"
    cardTitle="Login"
  >
    <Field label="E-mail" type="email" />
    <a href="#forgot" className="mt-4 block leading-6 text-[#30a5ff]">Forgot Password?</a>
    <Field label="Password" type="password" />
    <div className="mt-4 flex gap-[286px]">
      <button type="submit" className={btn}>Login</button>
      <button type="button" className={btn}>Register</button>
    </div>
  </AuthPage>
);

const SignupPage = () => (
  <AuthPage
    headClass="flex h-[164px] items-center justify-center gap-3 border-b border-[#e9edf0] pt-[70px]"
    nameClass="text-[45px] leading-none"
    cardTitle="Sign Up"
  >
    <div className="flex flex-col gap-[17px]">
      <Field label="Full Name" />
      <Field label="E-mail" type="email" />
      <Field label="Mobile Number" type="tel" />
      <Field label="Password" type="password" />
      <Field label="Repeat Password" type="password" />
    </div>
    <div className="mt-4 flex gap-[286px]">
      <button type="submit" className={btn}>Register</button>
      <button type="button" className={btn}>Login</button>
    </div>
  </AuthPage>
);

const ForgotPage = () => (
  <AuthPage
    headClass="flex h-[162px] items-center justify-center gap-3 border-b border-[#e9edf0] pt-[70px]"
    nameClass="text-[45px] leading-none"
    cardTitle="Log in"
  >
    <div className="flex flex-col gap-[17px]">
      <Field label="E-mail" type="email" focused />
      <Field label="Mobile Number" type="tel" />
    </div>
    <div className="mt-4 flex gap-[282px]">
      <button type="submit" className={btn}>Reset</button>
      <button type="button" className={btn}>Login</button>
    </div>
  </AuthPage>
);

/* ---------- dashboard ---------- */

const cards = [
  { title: "Today's Expense", value: "100", ring: "#30a5ff", text: "text-[#3aa0ee]", full: true },
  { title: "Yesterday's Expense", value: "0", ring: "#ffb53e", text: "text-[#f5b04a]", full: false },
  { title: "Last 7day's Expense", value: "100", ring: "#1ebfae", text: "text-[#2fbcae]", full: true },
  { title: "Last 30day's Expenses", value: "1099", ring: "#f9243f", text: "text-[#e2504f]", full: true },
  { title: "Current Year Expenses", value: "3599", text: "text-[#e2504f]" },
  { title: "Total Expenses", value: "5599", text: "text-[#e2504f]" },
];

function StatCard({ title, value, ring, text, full }) {
  return (
    <article className="flex h-[205px] flex-col items-center rounded bg-white pt-2 shadow-[0_1px_2px_rgba(0,0,0,0.08)]">
      <h2 className="h-[50px] text-[21px] font-light leading-8 text-[#444]">{title}</h2>
      <div className="relative flex h-[124px] w-[124px] items-center justify-center">
        {ring && (
          <svg viewBox="0 0 124 124" className="absolute inset-0" fill="none" aria-hidden="true">
            <circle cx="62" cy="62" r="60" stroke={full ? ring : "#f8f8f8"} strokeWidth="4" />
            {!full && <path d="M60.500 2h3" stroke={ring} strokeWidth="4" />}
          </svg>
        )}
        <span className={text}>
          <span className="text-[29px]">{value}</span>
        </span>
      </div>
    </article>
  );
}

const nav = [
  { label: "Dashboard", icon: <FaTachometerAlt className="h-[18px] w-[18px]" />, pad: "ml-2", active: true },
  { label: "Expenses", icon: <FaBars className="h-[18px] w-4" />, pad: "ml-1", plus: true },
  { label: "Expense Report", icon: <FaBars className="h-[18px] w-4" />, pad: "ml-1", plus: true },
  { label: "Change Password", icon: <FaRegClone className="h-[18px] w-[18px] -scale-x-100" />, pad: "ml-2" },
  { label: "Logout", icon: <FaPowerOff className="h-4 w-4" />, pad: "ml-2" },
];

function DashboardPage() {
  return (
    <div className="flex flex-1 flex-col font-['Inter',sans-serif]">
      <header className="flex h-[68px] shrink-0 items-center gap-3 bg-black pl-[17px]">
        <Logo />
        <span className="text-[24px] leading-none text-white">BUDGETBUDDY</span>
      </header>
      <div className="flex flex-1">
        <aside className="w-[280px] shrink-0 bg-white">
          <div className="flex h-[103px] items-center border-b-2 border-[#f3f4f6] pl-[17px]">
            <svg viewBox="0 0 56 56" className="h-14 w-14" role="img" aria-label="Avatar">
              <circle cx="28" cy="28" r="28" fill="#d07fa0" />
              <circle cx="28" cy="15.500" r="9" fill="#fbd0df" />
              <path d="M10 40c3-8 10-12 18-12s15 4 18 12c-3 7-10 10.500-18 10.500S13 47 10 40z" fill="#fbd0df" />
            </svg>
            <div className="ml-[14px]">
              <div className="text-[24px] font-light leading-7 text-[#30a5ff]">Harshita N</div>
              <div className="flex items-center gap-[5px] text-[15px] font-semibold leading-6 text-[#aaa]">
                <span className="h-3 w-3 rounded-full bg-[#8ad919]" />ONLINE
              </div>
            </div>
          </div>
          <nav className="pt-[22px]">
            {nav.map((n) => (
              <a
                key={n.label}
                href="#dashboard"
                className={
                  n.active
                    ? "flex h-[57px] items-center bg-[#30a5ff] px-[17px] text-[18px] font-light text-white"
                    : "flex h-[56px] items-center px-[17px] text-[18px] font-light text-[#444]"
                }
              >
                {n.icon}
                <span className={n.pad}>{n.label}</span>
                {n.plus && <FaPlus className="ml-auto h-[14px] w-[14px]" />}
              </a>
            ))}
          </nav>
        </aside>
        <div className="min-w-0 flex-1">
          <div className="flex h-[45px] items-center bg-[#e9ecf4] pl-[18px] text-[17px] font-light text-[#777]">
            <FaHome className="h-4 w-4 text-[#30a5ff]" />
            <span className="mx-[8px] text-[#bbb]">/</span>
            Dashboard
          </div>
          <h1 className="pl-4 pt-5 text-[49px] font-extralight leading-[52px] text-[#444]">Dashboard</h1>
          <div className="mt-8 grid grid-cols-4 gap-x-[34px] gap-y-[23px] px-[18px]">
            {cards.map((c) => (
              <StatCard key={c.title} {...c} />
            ))}
          </div>
        </div>
      </div>
      <div className="absolute bottom-0 left-0 flex h-[26px] items-center rounded-tr bg-[#cdcdcd] px-[6px] font-['Open_Sans',sans-serif] text-[13px] text-[#111]">
        localhost/dets/dashboard.php
      </div>
    </div>
  );
}

export default function App() {
  return (
    <div className="grid min-h-screen grid-cols-2 grid-rows-2">
      <Gradients />
      <BrowserWindow title="BUDGET BUDDY Login" path="/dets/index.php"><LoginPage /></BrowserWindow>
      <BrowserWindow title="Budget Buddy - Signup" path="/dets/register.php"><SignupPage /></BrowserWindow>
      <BrowserWindow title="Budget Buddy - Forgot Password" path="/dets/forgot-password.php"><ForgotPage /></BrowserWindow>
      <BrowserWindow title="BudgetBuddy - Dashboard" path="/dets/dashboard.php"><DashboardPage /></BrowserWindow>
    </div>
  );
}
